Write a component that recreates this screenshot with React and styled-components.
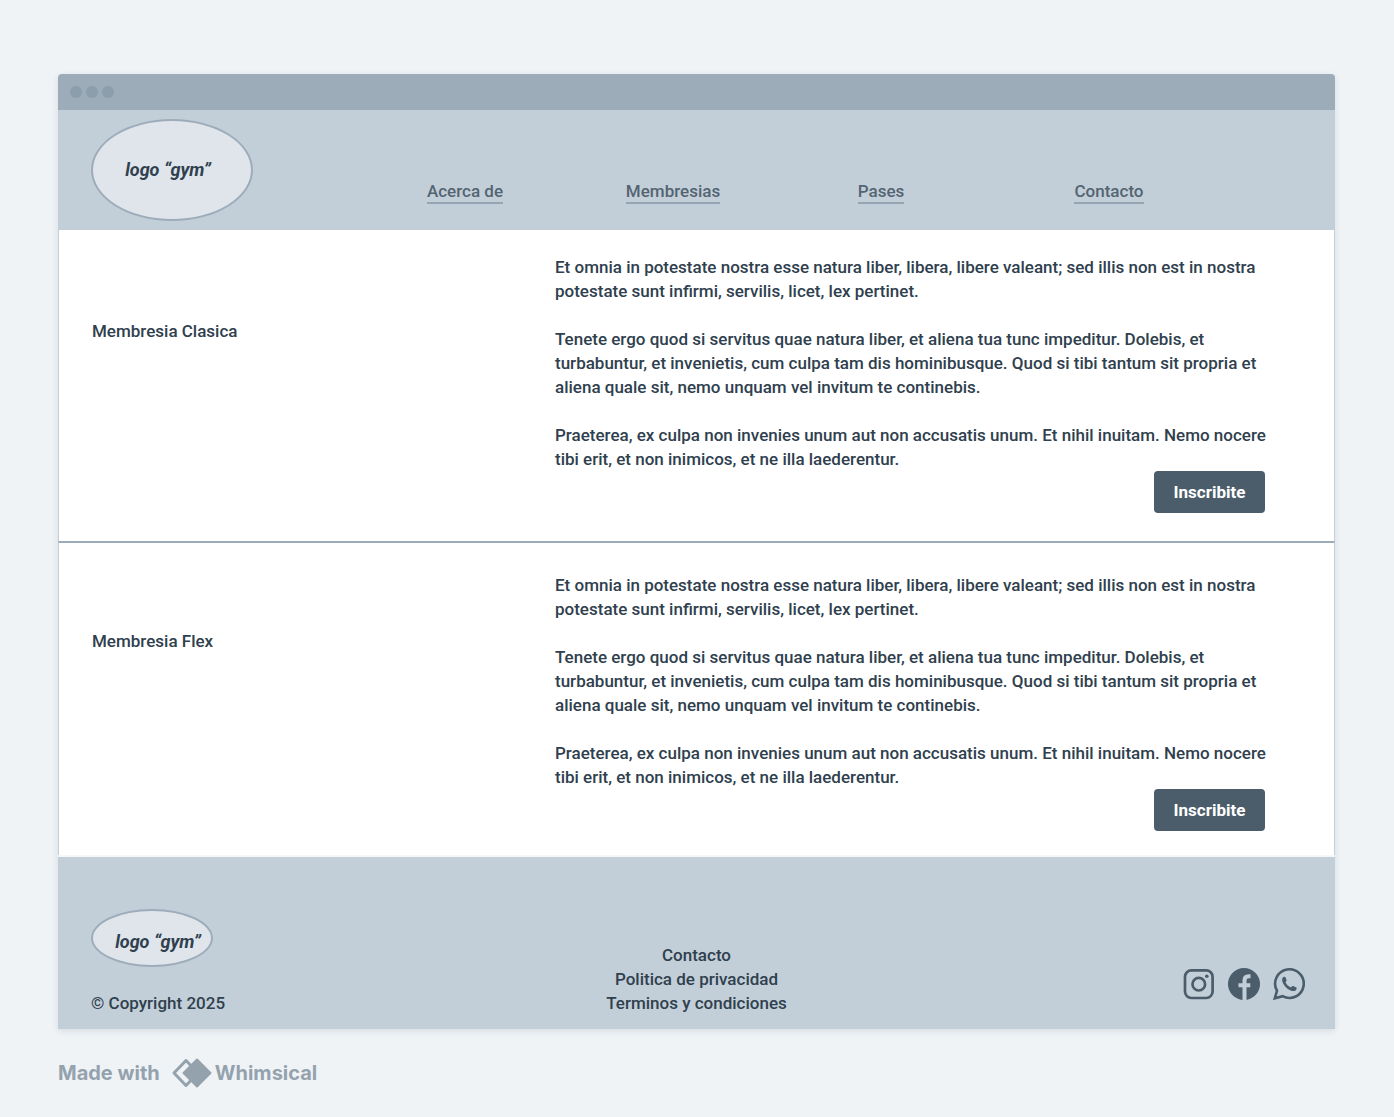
import React from 'react';
import styled, { createGlobalStyle } from 'styled-components';

const GlobalStyle = createGlobalStyle`
  *, *::before, *::after { box-sizing: border-box; }
  body {
    margin: 0;
    background: #eff3f6;
    color: #2f404e;
    font-family: Roboto, "Liberation Sans", sans-serif;
    font-size: 17px;
    font-weight: 500;
    line-height: 24px;
  }
  p, h2, ul { margin: 0; padding: 0; font-size: inherit; font-weight: inherit; }
  ul { list-style: none; }
  a { color: inherit; text-decoration: none; }
`;

const Page = styled.div`
  padding: 74px 59px 26px 58px;
`;

const BrowserWindow = styled.div`
  border-radius: 4px 4px 0 0;
  box-shadow: 0 2px 6px rgba(60, 85, 105, 0.14);
`;

const TitleBar = styled.div`
  display: flex;
  align-items: center;
  gap: 4px;
  height: 36px;
  padding: 0 12px;
  border-radius: 4px 4px 0 0;
  background: #9dacb9;
`;

const Dot = styled.span`
  width: 12px;
  height: 12px;
  border-radius: 50%;
  background: #8c9dac;
`;

const Header = styled.header`
  display: grid;
  grid-template-columns: 270px 1fr;
  height: 120px;
  padding: 9px 102px 0 33px;
  background: #c3cfd8;
`;

const Logo = styled.div`
  display: flex;
  align-items: center;
  justify-content: center;
  width: ${({ $small }) => ($small ? 122 : 162)}px;
  height: ${({ $small }) => ($small ? 58 : 102)}px;
  padding: ${({ $small }) => ($small ? '8px 0 0 12px' : '0 8px 0 0')};
  border: 2px solid #9dacba;
  border-radius: 50%;
  background: #e0e5ec;
  font-size: 18px;
  font-weight: 700;
  font-style: italic;
  white-space: nowrap;
`;

const Nav = styled.nav`
  display: grid;
  grid-template-columns: 208fr 208fr 208fr 248fr;
  align-self: end;
  justify-items: center;
  padding-bottom: 26px;
  color: #536473;
`;

const NavLink = styled.a`
  border-bottom: 2px solid #96a5b3;
  line-height: 22px;
`;

const Plan = styled.section`
  display: grid;
  grid-template-columns: 463px 1fr;
  padding: ${({ $top, $bottom }) => `${$top}px 53px ${$bottom}px 33px`};
  border: 1px solid #c3cfd8;
  border-width: 0 1px;
  background: #ffffff;

  & + & { border-top: 2px solid #9dacba; }
`;

const PlanName = styled.h2`
  padding-top: ${({ $offset }) => $offset}px;
`;

const PlanBody = styled.div`
  display: flex;
  flex-direction: column;
`;

const Paragraph = styled.p`
  & + & { margin-top: 24px; }
`;

const JoinButton = styled.button`
  align-self: flex-end;
  width: 111px;
  height: 42px;
  margin-right: 16px;
  border: 0;
  border-radius: 4px;
  background: #4b5d6b;
  color: #ffffff;
  font: inherit;
  font-weight: 700;
  cursor: pointer;
`;

const Footer = styled.footer`
  display: grid;
  grid-template-columns: 1fr auto 1fr;
  align-items: end;
  height: 174px;
  padding: 0 30px 14px;
  border-top: 2px solid #f5f7f9;
  background: #c3cfd8;
`;

const Brand = styled.div`
  display: flex;
  flex-direction: column;
  gap: 24px;
  padding-left: 3px;
`;

const FooterLinks = styled.ul`
  text-align: center;
`;

const Socials = styled.div`
  display: flex;
  justify-content: flex-end;
  gap: 13px;
  padding-bottom: 15px;
  color: #4b5d6b;
  a { display: flex; }
`;

const MadeWith = styled.a`
  display: inline-flex;
  align-items: center;
  margin-top: 29px;
  font-family: Inter, sans-serif;
  font-size: 20px;
  font-weight: 700;
  line-height: 30px;

  &, &:visited { color: #94a2ad; }
`;

const Mark = styled.svg`
  margin: 0 3px 0 11px;
`;

const InstagramIcon = () => (
  <svg width="32" height="32" viewBox="0 0 32 32" fill="none" stroke="currentColor" strokeWidth="2.7" aria-hidden="true">
    <rect x="2" y="2.4" width="27.6" height="27.6" rx="6.4" />
    <circle cx="15.8" cy="16.2" r="6.3" />
    <circle cx="23.8" cy="8.2" r="1.8" fill="currentColor" stroke="none" />
  </svg>
);

const FacebookIcon = () => (
  <svg width="32" height="32" viewBox="0 0 32 32" fill="none" aria-hidden="true">
    <circle cx="16" cy="16" r="16" fill="currentColor" />
    <path d="M22.5 8.2H20.8C17.9 8.2 16.5 9.8 16.5 12.4V32M10.5 17.2H22.3" stroke="#c3cfd8" strokeWidth="4" />
  </svg>
);

const WhatsAppIcon = () => (
  <svg width="32" height="32" viewBox="0 0 32 32" fill="none" aria-hidden="true">
    <path d="M1.8 30.3L4 22.7A14.3 14.3 0 1 1 9.6 28.2Z" stroke="currentColor" strokeWidth="2.6" />
    <path fill="currentColor" d="M9.1 11.5C9.1 10 10.3 8.7 11.3 8.7C12.4 8.7 12.6 9.2 13.2 10.9C13.8 12.4 13.6 12.8 12.5 14.3C13.6 16.7 15.6 18.5 18 19.5C19.3 18.2 19.6 17.8 20.8 18.3L23.4 19.6C24 20 23.6 21.5 22.8 22.2C20.8 24 17.4 22.6 14.8 20.9C11.8 18.8 9 14.6 9.1 11.5Z" />
  </svg>
);

const LOREM = [
  'Et omnia in potestate nostra esse natura liber, libera, libere valeant; sed illis non est in nostra potestate sunt infirmi, servilis, licet, lex pertinet.',
  'Tenete ergo quod si servitus quae natura liber, et aliena tua tunc impeditur. Dolebis, et turbabuntur, et invenietis, cum culpa tam dis hominibusque. Quod si tibi tantum sit propria et aliena quale sit, nemo unquam vel invitum te continebis.',
  'Praeterea, ex culpa non invenies unum aut non accusatis unum. Et nihil inuitam. Nemo nocere tibi erit, et non inimicos, et ne illa laederentur.',
];

const PLANS = [
  { name: 'Membresia Clasica', top: 25, bottom: 28, offset: 64 },
  { name: 'Membresia Flex', top: 30, bottom: 24, offset: 56 },
];

export default function App() {
  return (
    <>
      <GlobalStyle />
      <Page>
        <BrowserWindow>
          <TitleBar><Dot /><Dot /><Dot /></TitleBar>
          <Header>
            <Logo>logo “gym”</Logo>
            <Nav>
              <NavLink href="#acerca">Acerca de</NavLink>
              <NavLink href="#membresias">Membresias</NavLink>
              <NavLink href="#pases">Pases</NavLink>
              <NavLink href="#contacto">Contacto</NavLink>
            </Nav>
          </Header>
          <main>
            {PLANS.map((plan) => (
              <Plan key={plan.name} $top={plan.top} $bottom={plan.bottom}>
                <PlanName $offset={plan.offset}>{plan.name}</PlanName>
                <PlanBody>
                  {LOREM.map((text) => <Paragraph key={text}>{text}</Paragraph>)}
                  <JoinButton type="button">Inscribite</JoinButton>
                </PlanBody>
              </Plan>
            ))}
          </main>
          <Footer>
            <Brand>
              <Logo $small>logo “gym”</Logo>
              <p>© Copyright 2025</p>
            </Brand>
            <FooterLinks>
              <li><a href="#contacto">Contacto</a></li>
              <li><a href="#privacidad">Politica de privacidad</a></li>
              <li><a href="#terminos">Terminos y condiciones</a></li>
            </FooterLinks>
            <Socials>
              <a href="#instagram" aria-label="Instagram"><InstagramIcon /></a>
              <a href="#facebook" aria-label="Facebook"><FacebookIcon /></a>
              <a href="#whatsapp" aria-label="WhatsApp"><WhatsAppIcon /></a>
            </Socials>
          </Footer>
        </BrowserWindow>
        <MadeWith href="#whimsical">
          Made with
          <Mark width="41" height="30" viewBox="0 0 41 30" aria-hidden="true">
            <path d="M15 2.5L3 15L15 27.5L27 15Z" fill="none" stroke="currentColor" strokeWidth="3" strokeLinejoin="round" />
            <path d="M26 1.5L39.5 15L26 28.5L12.5 15Z" fill="currentColor" stroke="currentColor" strokeWidth="2" strokeLinejoin="round" />
          </Mark>
          Whimsical
        </MadeWith>
      </Page>
    </>
  );
}
